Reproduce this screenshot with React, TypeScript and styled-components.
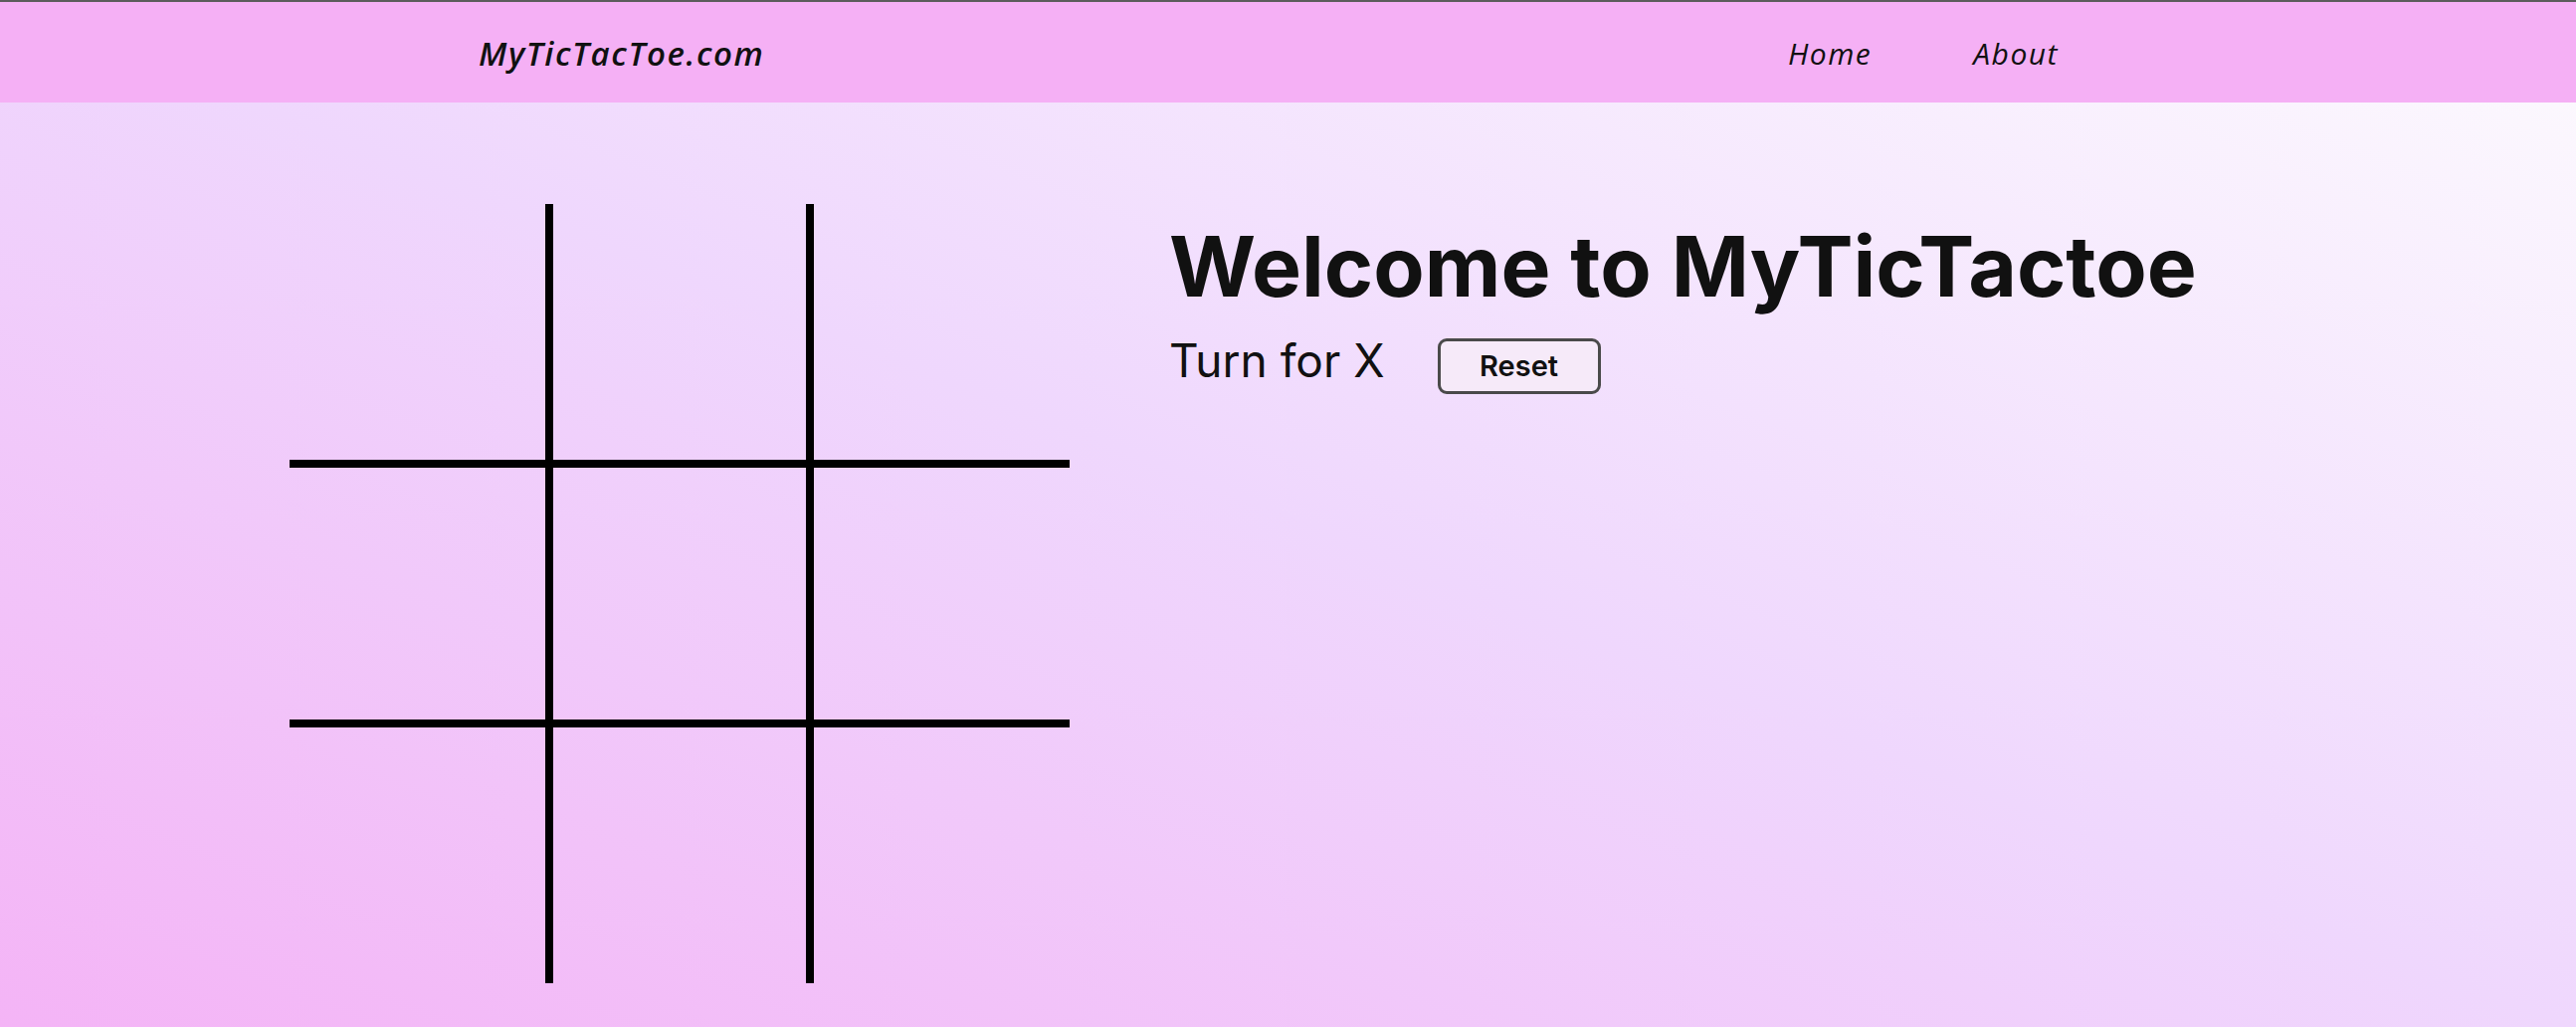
import React from "react";
import styled, { createGlobalStyle } from "styled-components";

const GlobalStyle = createGlobalStyle`
  html, body {
    margin: 0;
    padding: 0;
  }
  body {
    font-family: "Inter", "Liberation Sans", sans-serif;
    color: #111;
  }
  * { box-sizing: border-box; }
`;

const Page = styled.div`
  min-height: 100vh;
  display: flex;
  flex-direction: column;
  border-top: 2px solid #5c5c5c;
  background: linear-gradient(to top right, #f4b4f6 0%, #efd7fd 50%, #fdfbfe 100%);
`;

const NavBar = styled.header`
  height: 101px;
  background: #f5b0f5;
  display: flex;
  align-items: center;
  padding: 2px 520px 0 481px;
`;

const Logo = styled.a`
  font-family: "Open Sans", sans-serif;
  font-style: italic;
  font-weight: 600;
  font-size: 33px;
  letter-spacing: 1.6px;
  color: #111;
  text-decoration: none;
`;

const NavLinks = styled.nav`
  margin-left: auto;
  display: flex;
  gap: 102px;
`;

const NavLink = styled.a`
  font-family: "Open Sans", sans-serif;
  font-style: italic;
  font-weight: 500;
  font-size: 30px;
  letter-spacing: 1.5px;
  color: #111;
  text-decoration: none;
`;

const Main = styled.main`
  flex: 1;
  display: flex;
  align-items: flex-start;
  gap: 100px;
  padding: 102px 0 0 291px;
`;

const Board = styled.div`
  width: 784px;
  height: 783px;
  display: grid;
  grid-template-columns: repeat(3, 1fr);
  grid-template-rows: repeat(3, 1fr);
`;

const Cell = styled.button<{ $col: number; $row: number }>`
  background: transparent;
  padding: 0;
  margin: 0;
  cursor: pointer;
  border: 0 solid #000;
  border-left-width: ${(p) => (p.$col > 0 ? 4 : 0)}px;
  border-right-width: ${(p) => (p.$col < 2 ? 4 : 0)}px;
  border-top-width: ${(p) => (p.$row > 0 ? 4 : 0)}px;
  border-bottom-width: ${(p) => (p.$row < 2 ? 4 : 0)}px;
`;

const Info = styled.section`
  display: flex;
  flex-direction: column;
  padding-top: 13px;
`;

const Title = styled.h1`
  margin: 0;
  font-family: "Inter", sans-serif;
  font-weight: 700;
  font-size: 84px;
  line-height: 1.2;
  letter-spacing: 0px;
  color: #111;
`;

const StatusRow = styled.div`
  display: flex;
  align-items: center;
  gap: 53px;
  margin-top: 10px;
`;

const Status = styled.p`
  margin: 0;
  font-family: "Inter", sans-serif;
  font-weight: 400;
  font-size: 46px;
  color: #111;
`;

const ResetButton = styled.button`
  width: 164px;
  height: 56px;
  margin-top: 11px;
  border: 3px solid #4a4a4a;
  border-radius: 9px;
  background: #f6eaf9;
  font-family: "Inter", sans-serif;
  font-weight: 600;
  font-size: 29px;
  color: #111;
  cursor: pointer;
`;

export default function App() {
  const cells = Array.from({ length: 9 }, (_, i) => i);
  return (
    <>
      <GlobalStyle />
      <Page>
        <NavBar>
          <Logo href="#">MyTicTacToe.com</Logo>
          <NavLinks>
            <NavLink href="#">Home</NavLink>
            <NavLink href="#">About</NavLink>
          </NavLinks>
        </NavBar>
        <Main>
          <Board>
            {cells.map((i) => (
              <Cell key={i} $col={i % 3} $row={Math.floor(i / 3)} aria-label={`cell ${i + 1}`} />
            ))}
          </Board>
          <Info>
            <Title>Welcome to MyTicTactoe</Title>
            <StatusRow>
              <Status>Turn for X</Status>
              <ResetButton>Reset</ResetButton>
            </StatusRow>
          </Info>
        </Main>
      </Page>
    </>
  );
}
